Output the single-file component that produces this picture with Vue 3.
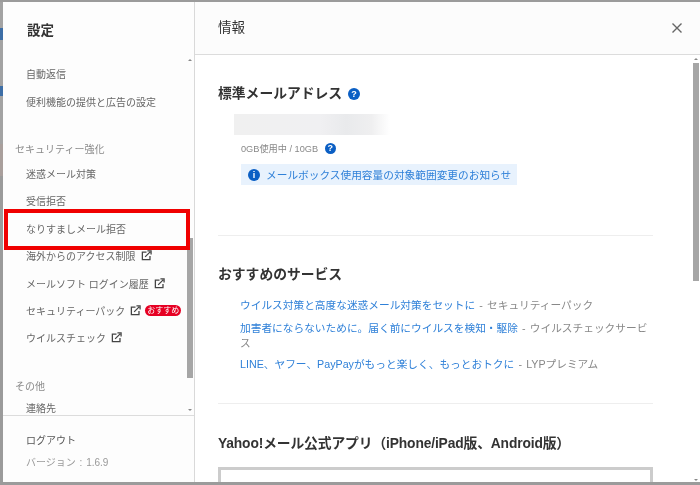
<script setup>
const groups = [
  { items: [{ t: '自動返信' }, { t: '便利機能の提供と広告の設定' }] },
  {
    head: 'セキュリティー強化',
    items: [
      { t: '迷惑メール対策' },
      { t: '受信拒否' },
      { t: 'なりすましメール拒否' },
      { t: '海外からのアクセス制限', ext: true },
      { t: 'メールソフト ログイン履歴', ext: true },
      { t: 'セキュリティーパック', ext: true, badge: 'おすすめ' },
      { t: 'ウイルスチェック', ext: true },
    ],
  },
  { head: 'その他', items: [{ t: '連絡先' }] },
]
const services = [
  { link: 'ウイルス対策と高度な迷惑メール対策をセットに', name: 'セキュリティーパック' },
  { link: '加害者にならないために。届く前にウイルスを検知・駆除', name: 'ウイルスチェックサービス' },
  { link: 'LINE、ヤフー、PayPayがもっと楽しく、もっとおトクに', name: 'LYPプレミアム' },
]
</script>

<template>
  <div class="screen">
    <div class="peek">
      <i class="p-grey" style="height: 26px"></i>
      <i class="p-blue" style="height: 12px"></i>
      <i class="p-grey" style="height: 46px"></i>
      <i class="p-blue" style="height: 10px"></i>
      <i class="p-grey" style="height: 48px"></i>
      <i class="p-red" style="height: 32px"></i>
    </div>
    <div class="dialog">
      <aside class="side">
        <h2 class="side-title">設定</h2>
        <div class="side-body">
          <nav class="side-scroll">
            <section v-for="(g, i) in groups" :key="i" class="group">
              <h3 v-if="g.head" class="group-head">{{ g.head }}</h3>
              <div v-for="item in g.items" :key="item.t" class="row">
                <span>{{ item.t }}</span>
                <svg v-if="item.ext" class="ext" viewBox="0 0 12 12" width="11" height="11">
                  <path d="M6 2.2H1.5v8.3H9.8V6.5" fill="none" stroke="#444" stroke-width="1.4" />
                  <path d="M4.5 7.5 10 2M7 1h4v4" fill="none" stroke="#444" stroke-width="1.4" />
                </svg>
                <b v-if="item.badge" class="badge">{{ item.badge }}</b>
              </div>
            </section>
          </nav>
          <div class="track side-track">
            <span class="arrow up"></span>
            <span class="thumb"></span>
            <span class="arrow down"></span>
          </div>
        </div>
        <footer class="side-foot">
          <div class="logout">ログアウト</div>
          <div class="version">バージョン : 1.6.9</div>
        </footer>
        <div class="highlight"></div>
      </aside>

      <main class="main">
        <header class="main-head">
          <h2 class="main-title">情報</h2>
          <svg class="close" viewBox="0 0 12 12" width="12" height="12">
            <path d="M1.5 1.5l9 9M10.5 1.5l-9 9" stroke="#666" stroke-width="1.4" />
          </svg>
        </header>
        <div class="main-body">
          <div class="content">
            <section class="block first">
              <h3 class="heading">標準メールアドレス <span class="help">?</span></h3>
              <div class="email"><div class="smudge"></div></div>
              <p class="usage">0GB使用中 / 10GB <span class="help small">?</span></p>
              <p class="notice"><span class="help info">i</span><a>メールボックス使用容量の対象範囲変更のお知らせ</a></p>
            </section>
            <section class="block second">
              <h3 class="heading">おすすめのサービス</h3>
              <ul class="services">
                <li v-for="s in services" :key="s.name"><a>{{ s.link }}</a> - {{ s.name }}</li>
              </ul>
            </section>
            <section class="block last">
              <h3 class="heading tight">Yahoo!メール公式アプリ（iPhone/iPad版、Android版）</h3>
              <div class="app-box"></div>
            </section>
          </div>
          <div class="track main-track">
            <span class="arrow up"></span>
            <span class="thumb"></span>
            <span class="arrow down"></span>
          </div>
        </div>
      </main>
    </div>
  </div>
</template>

<style>
html, body { margin: 0; overflow: hidden; }
</style>

<style scoped>
.screen {
  width: 700px;
  height: 485px;
  box-sizing: border-box;
  padding: 2px 0 3px;
  display: flex;
  background: #9b9b9b;
  overflow: hidden;
  font-family: "Liberation Sans", "Noto Sans CJK JP", sans-serif;
  filter: blur(0.4px);
}
.peek { width: 3px; display: flex; flex-direction: column; }
.peek i { display: block; }
.p-grey { background: #a3a3a3; }
.p-blue { background: #3d6ea6; }
.p-red { background: #a99f9c; }

.dialog { flex: 1; display: flex; background: #fff; min-width: 0; }

.side {
  position: relative;
  width: 191px;
  flex: none;
  border-right: 1px solid #d9d9d9;
  background: #fdfdfd;
  display: flex;
  flex-direction: column;
}
.side-title {
  margin: 0;
  height: 48px;
  padding-left: 24px;
  font-size: 13.5px;
  font-weight: 700;
  line-height: 57px;
  color: #333;
}
.side-body { flex: 1; display: flex; min-height: 0; }
.side-scroll { flex: 1; padding-top: 10px; overflow: hidden; min-width: 0; }
.group { margin-bottom: 26.5px; }
.group-head {
  margin: 0;
  padding-left: 12px;
  height: 17px;
  line-height: 17px;
  font-size: 10px;
  font-weight: 400;
  color: #8a8a8a;
}
.group-head + .row { margin-top: 1.5px; }
.group:last-child .group-head + .row { margin-top: -1px; }
.row {
  height: 27.4px;
  display: flex;
  align-items: center;
  padding-left: 23px;
  font-size: 10px;
  color: #666;
  white-space: nowrap;
}
.ext { margin-left: 5px; flex: none; }
.badge {
  margin-left: 4px;
  height: 11px;
  width: 36px;
  border-radius: 6px;
  background: #e60023;
  color: #fff;
  font-size: 8px;
  font-weight: 400;
  line-height: 11px;
  text-align: center;
}
.track {
  flex: none;
  width: 6px;
  display: flex;
  flex-direction: column;
  align-items: center;
}
.side-track { margin-right: 1px; padding-top: 9px; }
.main-track { margin-right: 1px; padding-top: 3px; }
.arrow { width: 0; height: 0; border-left: 2px solid transparent; border-right: 2px solid transparent; }
.arrow.up { border-bottom: 2px solid #888; }
.arrow.down { border-top: 2px solid #888; margin-top: auto; }
.side-track .arrow.down { margin-bottom: 4px; }
.main-track .arrow.down { margin-bottom: 1px; }
.thumb { width: 6px; background: #a6a6a6; }
.side-track .thumb { margin-top: 177px; height: 140px; }
.main-track .thumb { margin-top: 3px; height: 218px; }

.side-foot {
  height: 67px;
  flex: none;
  box-sizing: border-box;
  border-top: 1px solid #dcdcdc;
  padding: 17px 0 0 23px;
  font-size: 10px;
}
.logout { height: 16px; line-height: 16px; color: #555; }
.version { margin-top: 6px; height: 16px; line-height: 16px; color: #999; word-spacing: 1px; }

.highlight {
  position: absolute;
  left: 1px;
  top: 207px;
  width: 186px;
  height: 41px;
  box-sizing: border-box;
  border: 4px solid #f00000;
}

.main { flex: 1; display: flex; flex-direction: column; min-width: 0; }
.main-head {
  height: 53px;
  flex: none;
  box-sizing: border-box;
  border-bottom: 1px solid #dcdcdc;
  background: #fcfcfc;
  display: flex;
  align-items: center;
  justify-content: space-between;
  padding: 0 17px 0 23px;
}
.main-title { margin: 0 0 5px; font-size: 13.5px; font-weight: 400; color: #333; }
.main-body { flex: 1; display: flex; min-height: 0; overflow: hidden; }
.content { flex: 1; min-width: 0; padding: 0 0 0 23px; overflow: hidden; }
.block { width: 435px; border-bottom: 1px solid #eee; }
.heading {
  margin: 0;
  height: 20px;
  line-height: 20px;
  font-size: 13.8px;
  font-weight: 700;
  color: #333;
  white-space: nowrap;
}
.heading.tight { letter-spacing: -0.14px; }
.first { padding-top: 29px; height: 151px; }
.help {
  display: inline-block;
  width: 12px;
  height: 12px;
  border-radius: 50%;
  background: #0b5fc4;
  color: #fff;
  font-size: 9px;
  font-weight: 700;
  line-height: 12px;
  text-align: center;
  vertical-align: 1px;
  margin-left: 2px;
  letter-spacing: 0;
}
.help.small { margin-left: 4px; width: 11px; height: 11px; line-height: 11px; }
.email { height: 21px; margin: 10px 0 0 16px; width: 156px; overflow: hidden; }
.smudge {
  height: 21px;
  background: linear-gradient(90deg, #f0f0f0, #f0f0f2 55%, #e9eaec 72%, #efeff0 88%, #fff);
}
.usage { margin: 7px 0 0 23px; height: 14px; line-height: 14px; font-size: 9.2px; color: #888; }
.notice {
  margin: 8px 0 0 23px;
  width: 276px;
  height: 21px;
  box-sizing: border-box;
  padding-left: 7px;
  display: flex;
  align-items: center;
  background: #e8f2fd;
  font-size: 10.7px;
  white-space: nowrap;
}
.notice .info { margin: 0 6px 0 0; vertical-align: 0; flex: none; }
a { color: #2f80d8; }
.second { padding-top: 29px; height: 138px; }
.services {
  list-style: none;
  margin: 13px 0 0;
  padding: 0 0 0 22px;
  font-size: 10.7px;
  line-height: 15px;
  color: #888;
  word-spacing: 1.2px;
}
.services li { margin-bottom: 6px; }
.services li:first-child { margin-bottom: 8px; }
.block.last { padding-top: 30px; border-bottom: 0; }
.app-box { margin-top: 13px; height: 40px; border: 3px solid #ccc; }
</style>
